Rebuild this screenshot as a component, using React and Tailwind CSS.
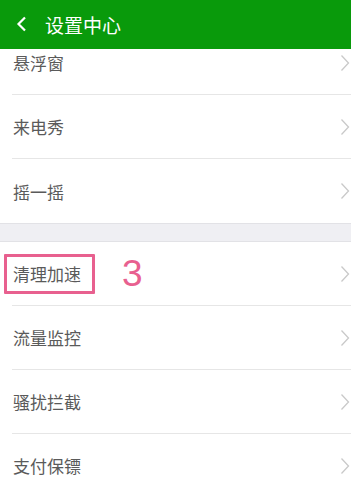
import React from "react";

const font = { fontFamily: '"Noto Sans CJK SC", "Noto Sans", sans-serif' };

function Chevron() {
  return (
    <svg width="10" height="18" viewBox="0 0 10 18" className="shrink-0">
      <path d="M1.5 1.5 L8.5 9 L1.5 16.5" fill="none" stroke="#c9c9c9" strokeWidth="1.3" />
    </svg>
  );
}

function Row({ label, last, children, extra = "" }) {
  return (
    <div className={"relative bg-white " + extra}>
      <div className={"ml-3 h-[64px] flex items-center justify-between pr-[1px] " + (last ? "" : "border-b border-[#e6e6e6]")}>
        <span className="text-[17px] text-[#5a5a5a] pl-[1px] leading-none">{label}</span>
        <Chevron />
      </div>
      {children}
    </div>
  );
}

export default function App() {
  return (
    <div className="w-[351px] h-[495px] overflow-hidden bg-white flex flex-col" style={font}>
      <div className="h-[49px] shrink-0 bg-[#099a0b] flex items-center">
        <svg width="12" height="16" viewBox="0 0 12 16" className="ml-[16px] mt-[-1px]">
          <path d="M9 1.5 L2.5 8 L9 14.5" fill="none" stroke="#fff" strokeWidth="2.2" />
        </svg>
        <span className="ml-[17px] text-[19px] text-white leading-none">设置中心</span>
      </div>
      <div className="flex-1 overflow-hidden">
        <div className="-mt-[18px]">
          <Row label="悬浮窗" />
          <Row label="来电秀" />
          <Row label="摇一摇" last />
          <div className="h-[19px] bg-[#efeff3] border-t border-b border-[#e2e2e6]" />
          <Row label="清理加速">
            <div className="absolute left-[4px] top-[12px] w-[91px] h-[40px] border-[3px] border-[#e8608f] rounded-[1px]" />
            <span
              className="absolute left-[122px] top-[13px] text-[37px] leading-none text-[#e8608f]"
              style={{ fontFamily: '"Liberation Sans", sans-serif' }}
            >
              3
            </span>
          </Row>
          <Row label="流量监控" />
          <Row label="骚扰拦截" />
          <Row label="支付保镖" />
        </div>
      </div>
    </div>
  );
}
